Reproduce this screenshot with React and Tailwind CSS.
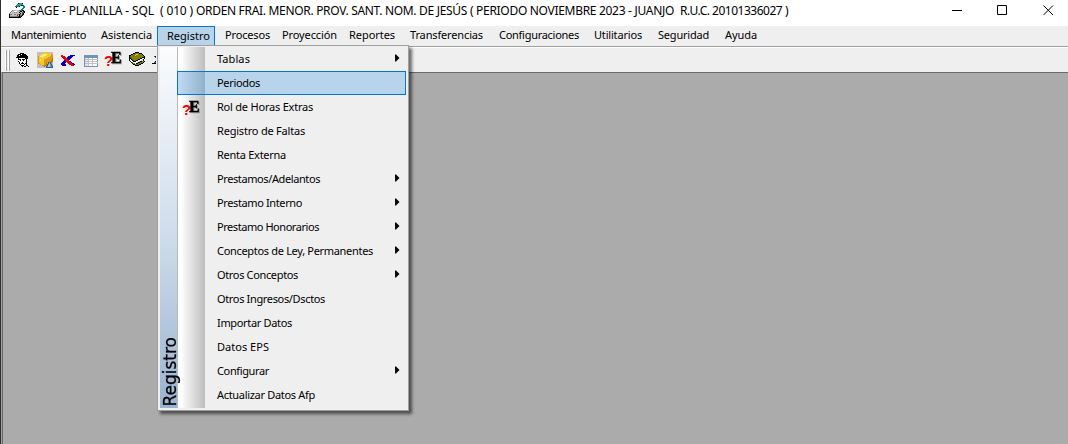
import { useLayoutEffect, useRef } from "react";

// Text set to an exact width by spreading the difference over its letters.
function Fit({ text, width }) {
  const ref = useRef(null);
  useLayoutEffect(() => {
    const el = ref.current;
    el.style.letterSpacing = "0px";
    const natural = el.getBoundingClientRect().width;
    el.style.letterSpacing = (width - natural) / text.length + "px";
  }, [text, width]);
  return (
    <span ref={ref} className="inline-block whitespace-pre">
      {text}
    </span>
  );
}

const titleParts = [
  ["SAGE - PLANILLA - SQL", 124, "w-[130px]"],
  ["( 010 )", 33, "w-[36px]"],
  ["ORDEN FRAI. MENOR. PROV. SANT. NOM. DE JESÚS", 271, "w-[274px]"],
  ["( PERIODO NOVIEMBRE 2023 - JUANJO", 204, "w-[210px]"],
  ["R.U.C. 20101336027 )", 108, "w-[108px]"],
];

const menus = [
  ["Mantenimiento", 75, "h-[17px] w-[90px]"],
  ["Asistencia", 51, "h-[17px] w-[56px]"],
  ["Registro", 43, "w-[58px] pl-[9px] pb-[3px] h-5 border border-b-0 border-[#0078d7] bg-[#b8d4ea]"],
  ["Procesos", 45, "h-[17px] w-[67px] pl-[10px]"],
  ["Proyección", 55, "h-[17px] w-[67px]"],
  ["Reportes", 46, "h-[17px] w-[61px]"],
  ["Transferencias", 73, "h-[17px] w-[89px]"],
  ["Configuraciones", 80, "h-[17px] w-[95px]"],
  ["Utilitarios", 48, "h-[17px] w-[64px]"],
  ["Seguridad", 51, "h-[17px] w-[67px]"],
  ["Ayuda", 32, "h-[17px] w-[40px]"],
];

const items = [
  ["Tablas", 33, true],
  ["Periodos", 43, false],
  ["Rol de Horas Extras", 96, false],
  ["Registro de Faltas", 88, false],
  ["Renta Externa", 69, false],
  ["Prestamos/Adelantos", 103, true],
  ["Prestamo Interno", 85, true],
  ["Prestamo Honorarios", 102, true],
  ["Conceptos de Ley, Permanentes", 156, true],
  ["Otros Conceptos", 81, true],
  ["Otros Ingresos/Dsctos", 108, false],
  ["Importar Datos", 75, false],
  ["Datos EPS", 52, false],
  ["Configurar", 52, true],
  ["Actualizar Datos Afp", 98, false],
];

const palette = {
  k: "#000000", w: "#ffffff", g: "#808080", l: "#c0c0c0", d: "#404040",
  t: "#008080", T: "#19a5a0", y: "#f8c62c", Y: "#ffec80", o: "#e09a12",
  O: "#b87808", b: "#0000d8", r: "#f00000", s: "#5f9cc5", n: "#235f91",
  v: "#808000", V: "#4d4d00", p: "#dce6f0", q: "#7694b4",
};

function Pixels({ rows, className }) {
  return (
    <svg
      className={className}
      width={rows[0].length}
      height={rows.length}
      shapeRendering="crispEdges"
      aria-hidden="true"
    >
      {rows.flatMap((row, y) =>
        [...row].map((c, x) =>
          c === "." ? null : (
            <rect key={x + "-" + y} x={x} y={y} width="1" height="1" fill={palette[c]} />
          )
        )
      )}
    </svg>
  );
}

const appIcon = [
  ".........ktTTk..",
  "........tTTTTT..",
  ".......tTTTTkkt.",
  "......tttTk...tt",
  ".......kw.....tt",
  ".............tt.",
  "............tt..",
  "...gllllllgttkk.",
  "..gllwwwlllkklkk",
  ".glllglgllklldgk",
  "gllllllllllkldk.",
  "kggllgglggkgldk.",
  "klllllllrlkgdk..",
  "kggggggggdkdk...",
  "kkkkkkkkkkkk....",
];

const faceIcon = [
  "....kkkk......",
  "..kkkwkkkk....",
  ".kkwkkkkkkk...",
  ".kkkkkkkkkkk..",
  "kkkkkkkkkkkk..",
  "..kwwwwwwkkk..",
  "..kkkwkkkwkw..",
  "..wwkwwkwwkw..",
  "..kwwwwwwwk...",
  "...kwwkwwwk...",
  "...kwkkkwkk...",
  "....kwwwkwk...",
  ".....kkkwwkk..",
  "......k.kk..k.",
];

const boxIcon = [
  "llllllllyyylllll",
  "llllllyyyyyyylll",
  "llllyyYYYYyyyyol",
  "llyyYYYYYyyyyyoo",
  "loyYYYYyyyyyyooo",
  "loyyyYyyyyyooooo",
  "loyyyyyyyooooooO",
  "loyYyyyooooooooO",
  "loyYyyyoooooooOO",
  "loyyyyyooooosoOO",
  "loyyyyyoooonsnOl",
  "looyyyyooOonlnsl",
  "llloyyyooOnslsnl",
  "lllllooOOOnllsns",
  "lllllllOlnsllssn",
  "lllllllllnnnnnnn",
];

const crossIcon = [
  "rr.......bbbbb",
  "rrrr...bbbbb..",
  ".rrrr.bbbbb...",
  "..rrrrbbbb....",
  "...rrrrbb.....",
  "...brrrr......",
  "..bbbrrrrb....",
  ".bbbb.rrrrb...",
  "bbbb...rrrrbb.",
  "bbbbb...rrrrbb",
  ".bbbb.....rrr.",
];

const tableIcon = [
  "qqqqqqqqqqqqqq",
  "qssssssssssssq",
  "qqqqqqqqqqqqqq",
  "qppplwwwlwwwwq",
  "qlllllllllllll",
  "qppplwwwlwwwwq",
  "qlllllllllllll",
  "qppplwwwlwwwwq",
  "qlllllllllllll",
  "qppplwwwlwwwwq",
  "qppplwwwlwwwwq",
  "qqqqqqqqqqqqqq",
];

const bookIcon = [
  "......kkkk......",
  "....kkvvvvkkk...",
  "..kkvvvyyvvvvk..",
  "kkvvvvyvvvvvvvk.",
  "kvvvvvvvvvvvvvvk",
  "kVvvvvvvvvvvvkkk",
  "kkVvvvvvvvvkkwwk",
  "kwkVvvvvvkkwwlk.",
  "kwwkVvvkkwwwlwk.",
  ".kwwkkkwwwlkkvvk",
  "..kvwwwwlkkvvvk.",
  "...kvvwkkvvvkk..",
  "....kkvvvvkk....",
  "......kkkk......",
];

const clippedIcon = [
  "..nk",
  "...n",
  "....",
  "....",
  "....",
  "...k",
  "..nn",
  "kkkk",
];

function HoursIcon() {
  return (
    <svg className="overflow-visible" width="20" height="20" aria-hidden="true">
      <text x="-1" y="19" fontFamily="Liberation Sans" fontWeight="700" fontSize="15" fill="#f00000">?</text>
      <text
        x="6"
        y="15.5"
        className="drop-shadow-[1px_1px_0_#999999]"
        fontFamily="Liberation Serif"
        fontWeight="700"
        fontSize="16"
        fill="#000"
        stroke="#000"
        strokeWidth="0.5"
      >
        E
      </text>
    </svg>
  );
}

function TitleBar() {
  return (
    <header className="flex h-[26px] bg-white pl-[8px]">
      <Pixels rows={appIcon} className="mt-[3px] mr-[5px] shrink-0" />
      <h1 className="flex h-[21px] items-center font-['Noto_Sans',sans-serif] text-[12px] leading-none font-normal text-black">
        {titleParts.map(([text, width, box]) => (
          <span key={text} className={"shrink-0 " + box}>
            <Fit text={text} width={width} />
          </span>
        ))}
      </h1>
      <svg className="mt-[5px] ml-auto mr-[14px] shrink-0" width="102" height="11" fill="none" stroke="#000">
        <path d="M0 5.5H10M45.5 .5h9v9h-9zM91.5 .5l9.5 9.5M101 .5l-9.5 9.5" />
      </svg>
    </header>
  );
}

function MenuBar() {
  return (
    <nav className="flex h-5 bg-[#efefef] pl-[10px]">
      {menus.map(([text, width, box]) => (
        <span key={text} className={"flex shrink-0 items-center " + box}>
          <Fit text={text} width={width} />
        </span>
      ))}
    </nav>
  );
}

function ToolBar() {
  return (
    <div className="flex h-[26px] border-t border-[#a0a0a0] bg-[#efefef]">
      <div className="flex w-full items-start border-t border-white">
        <span className="mt-[2px] ml-[4px] h-[21px] w-[2px] border-r border-[#a0a0a0] bg-white" />
        <span className="mt-[2px] ml-[1px] h-[21px] w-[2px] border-r border-[#a0a0a0] bg-white" />
        <Pixels rows={faceIcon} className="mt-[5px] ml-[6px]" />
        <Pixels rows={boxIcon} className="mt-[4px] ml-[7px]" />
        <Pixels rows={crossIcon} className="mt-[7px] ml-[8px]" />
        <Pixels rows={tableIcon} className="mt-[7px] ml-[9px]" />
        <span className="-mt-px ml-[7px]"><HoursIcon /></span>
        <Pixels rows={bookIcon} className="mt-[4px] ml-[4px]" />
        <Pixels rows={clippedIcon} className="mt-[8px] ml-[7px]" />
      </div>
    </div>
  );
}

function DropDown() {
  return (
    <div className="absolute top-[45px] left-[157px] flex h-[366px] w-[252px] border border-[#a0a0a0] bg-[#efefef] pt-[1px] pl-[2px] shadow-[3px_3px_3px_rgba(0,0,0,0.55)]">
      <div className="flex h-[361px] w-[17px] items-start bg-linear-to-b from-[#fbfcfd] via-[#ccdaea] via-55% to-[#98b4d2]">
        <span className="mt-auto mb-[1px] ml-[1px] rotate-180 font-['DejaVu_Sans',sans-serif] text-[17px] leading-[18px] text-black [-webkit-text-stroke:0.3px_black] [writing-mode:vertical-rl]">
          <span className="inline-block">Registro</span>
        </span>
      </div>
      <ul className="h-[361px] w-[229px] bg-[linear-gradient(to_right,#b8b8b8_0,#b8b8b8_1px,#fff_1px,#fff_4px,#bdbdbd_28px,#efefef_28px)]">
        {items.map(([text, width, sub]) => (
          <li
            key={text}
            className={
              "flex h-6 items-center border pr-[5px] pb-[2px] " +
              (text === "Periodos"
                ? "border-[#0078d7] bg-[linear-gradient(to_right,#c0dcf3_0,#90b0ca_27px,#b8d4ea_27px)]"
                : "border-transparent")
            }
          >
            <span className="flex w-[39px] shrink-0 pl-[5px]">
              {text === "Rol de Horas Extras" && <HoursIcon />}
            </span>
            <Fit text={text} width={width} />
            {sub && (
              <svg className="ml-auto" width="5" height="8">
                <path d="M0 .5h1l3.5 3.5L1 7.5H0z" fill="#000" />
              </svg>
            )}
          </li>
        ))}
      </ul>
    </div>
  );
}

export default function App() {
  return (
    <div className="relative flex h-[444px] w-[1068px] flex-col overflow-hidden border-l border-[#303030] bg-white font-['Noto_Sans',sans-serif] text-[11px] leading-none text-black">
      <TitleBar />
      <MenuBar />
      <ToolBar />
      <main className="ml-px grow border-t border-l border-[#696969] bg-[#ababab] shadow-[-1px_0_0_#a0a0a0]" />
      <div className="absolute top-0 -left-px">
        <DropDown />
      </div>
    </div>
  );
}
